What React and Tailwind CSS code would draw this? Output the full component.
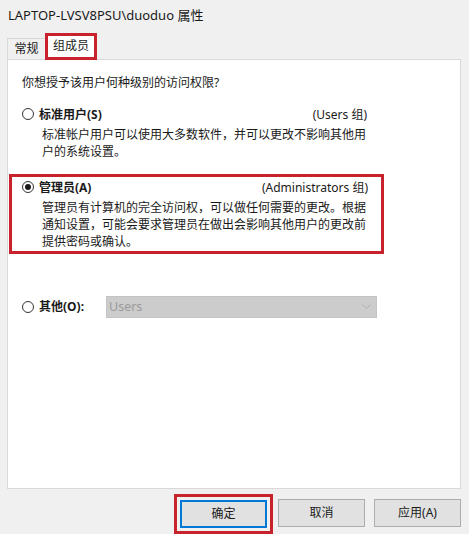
import React from "react";

const F = "font-['Noto_Sans','Noto_Sans_CJK_SC',sans-serif]";

function Radio({ checked }) {
  return (
    <span className="w-[12px] h-[12px] rounded-full border border-[#333333] bg-white flex items-center justify-center shrink-0">
      {checked && <span className="w-[6px] h-[6px] rounded-full bg-[#1a1a1a]" />}
    </span>
  );
}

export default function App() {
  return (
    <div className={`w-[469px] h-[534px] bg-[#f0f0f0] text-[#1a1a1a] flex flex-col ${F}`}>
      <div className="h-[32px] pl-[8px] flex items-center text-[13px] leading-[18px] text-[#1a1a1a] pb-[2px]">
        LAPTOP-LVSV8PSU\duoduo 属性
      </div>
      <div className="mx-[7px] h-[27px] flex items-end relative z-10">
        <div className="h-[21px] w-[39px] border border-b-0 border-[#d9d9d9] bg-[#f0f0f0] flex items-center justify-center text-[12px] leading-[14px] mb-0">
          常规
        </div>
        <div className="h-[27px] w-[52px] -ml-[1px] border-[3px] border-[#c8222d] bg-white flex items-center justify-center text-[12px] leading-[14px] mb-[-1px]">
          组成员
        </div>
      </div>
      <div className="mx-[7px] w-[454px] h-[431px] border border-[#d9d9d9] bg-white flex flex-col text-[12px] leading-[17px]">
        <div className="pl-[14px] pt-[14px]">你想授予该用户何种级别的访问权限?</div>

        <div className="mt-[15px] pl-[14px] pr-[93px]">
          <div className="flex items-center h-[17px]">
            <Radio />
            <span className="ml-[5px] font-bold">标准用户(S)</span>
            <span className="ml-auto">(Users 组)</span>
          </div>
          <div className="pl-[20px] mt-[3px]">
            标准帐户用户可以使用大多数软件，并可以更改不影响其他用户的系统设置。
          </div>
        </div>

        <div className="mt-[14px] ml-[1px] w-[375px] h-[80px] border-[3px] border-[#c8222d] pl-[10px] pr-[13px] pt-[2px]">
          <div className="flex items-center h-[17px]">
            <Radio checked />
            <span className="ml-[5px] font-bold">管理员(A)</span>
            <span className="ml-auto">(Administrators 组)</span>
          </div>
          <div className="pl-[20px] mt-[3px]">
            管理员有计算机的完全访问权，可以做任何需要的更改。根据通知设置，可能会要求管理员在做出会影响其他用户的更改前提供密码或确认。
          </div>
        </div>

        <div className="mt-[42px] pl-[14px] flex items-center">
          <Radio />
          <span className="ml-[5px] font-bold">其他(O):</span>
          <div className="ml-[22px] w-[271px] h-[22px] bg-[#cccccc] border border-[#c4c4c4] flex items-center pl-[2px] pr-[5px] text-[#9a9a9a]">
            <span className="text-[12.5px]">Users</span>
            <svg className="ml-auto" width="9" height="6" viewBox="0 0 9 6">
              <path d="M0.5 0.5 L4.5 4.5 L8.5 0.5" fill="none" stroke="#b0b0b0" strokeWidth="1" />
            </svg>
          </div>
        </div>
      </div>
      <div className="flex items-start mt-[5px] mr-[8px] justify-end gap-[9px] text-[12px]">
        <div className="border-[3px] border-[#c8222d] p-[3px] mr-[-4px]">
          <button className="w-[87px] h-[28px] bg-[#e1e1e1] border-2 border-[#0078d7] flex items-center justify-center">
            确定
          </button>
        </div>
        <button className="mt-[5px] w-[87px] h-[28px] bg-[#e1e1e1] border border-[#adadad] flex items-center justify-center">
          取消
        </button>
        <button className="mt-[5px] w-[87px] h-[28px] bg-[#e1e1e1] border border-[#adadad] flex items-center justify-center">
          应用(A)
        </button>
      </div>
    </div>
  );
}
